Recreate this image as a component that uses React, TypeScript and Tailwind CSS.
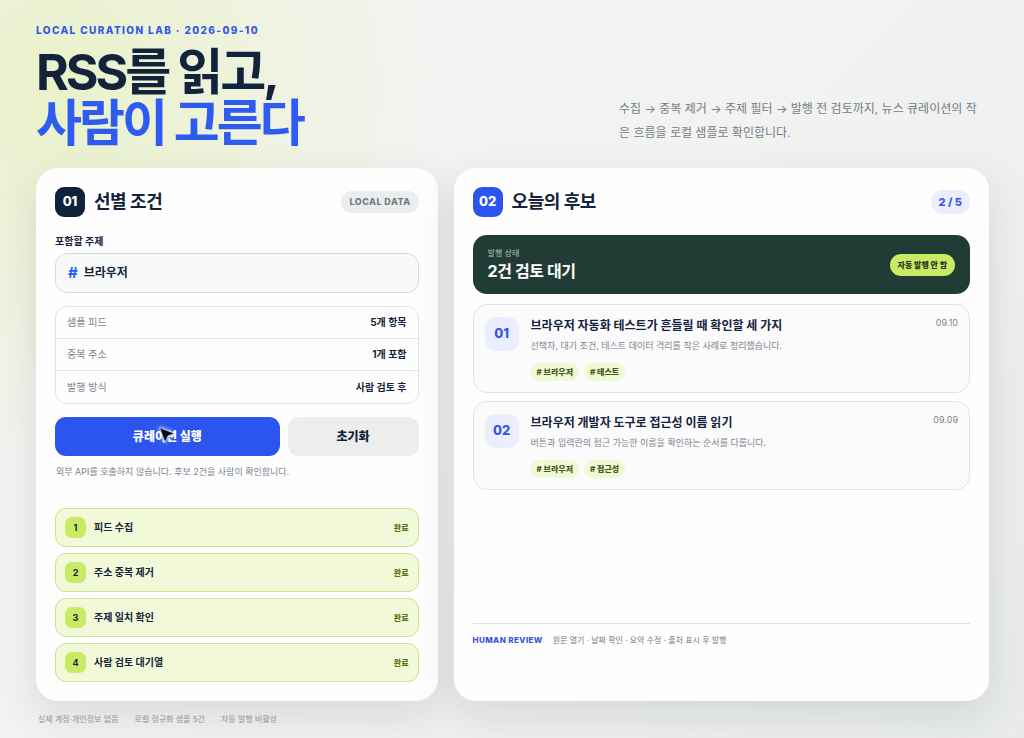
import { useState } from "react";
import clsx from "clsx";

type Article = {
	id: string;
	title: string;
	summary: string;
	date: string;
	tags: string[];
}

const facts = [
	{ label: "샘플 피드", value: "5개 항목" },
	{ label: "중복 주소", value: "1개 포함" },
	{ label: "발행 방식", value: "사람 검토 후" },
];

const steps = ["피드 수집", "주소 중복 제거", "주제 일치 확인", "사람 검토 대기열"];

const articles: Article[] = [
	{
		id: "01",
		title: "브라우저 자동화 테스트가 흔들릴 때 확인할 세 가지",
		summary: "선택자, 대기 조건, 테스트 데이터 격리를 작은 사례로 정리했습니다.",
		date: "09.10",
		tags: ["브라우저", "테스트"],
	},
	{
		id: "02",
		title: "브라우저 개발자 도구로 접근성 이름 읽기",
		summary: "버튼과 입력란의 접근 가능한 이름을 확인하는 순서를 다룹니다.",
		date: "09.09",
		tags: ["브라우저", "접근성"],
	},
];

const notes = ["실제 계정·개인정보 없음", "로컬 정규화 샘플 5건", "자동 발행 비활성"];

const PanelTitle: React.FC<{ no: string; title: string; accent?: boolean }> = ({ no, title, accent }) => (
	<div className="flex items-center gap-[9px]">
		<span
			className={clsx(
				"flex size-[30px] items-center justify-center rounded-[9px] text-[13px] font-extrabold text-white",
				accent ? "bg-[#2b55ec]" : "bg-[#10213b]"
			)}
		>
			{no}
		</span>
		<h2 className="text-[18px] leading-[26px] font-bold tracking-tight">{title}</h2>
	</div>
)

const Pointer = () => (
	<svg className="pointer-events-none absolute top-2 left-[102px] size-5 drop-shadow-[0_0_2px_#ffffff]" viewBox="0 0 20 20" aria-hidden="true">
		<path d="M2.5 2.5 17.5 8.5 11 11 8 17.5Z" fill="#080b14" stroke="#c4cffb" strokeWidth="0.8" strokeLinejoin="round" />
	</svg>
)

const ArticleCard: React.FC<{ article: Article }> = ({ article }) => (
	<li className="flex gap-3 rounded-[14px] border border-[#e1e4e6] bg-[#fbfbfc] px-[11px] pt-3 pb-[11px]">
		<span className="flex size-[34px] shrink-0 items-center justify-center rounded-[10px] bg-[#ebeeff] text-[13px] font-extrabold text-[#3557e0]">
			{article.id}
		</span>
		<div className="min-w-0 flex-1">
			<h3 className="text-[12px] leading-[18px] font-bold">{article.title}</h3>
			<p className="mt-[3px] text-[9px] leading-4 text-[#7c8591]">{article.summary}</p>
			<div className="mt-[9px] flex gap-[5px]">
				{article.tags.map(tag => (
					<span key={tag} className="rounded-full bg-[#f0f9d4] px-[6px] text-[8px] leading-[18px] font-extrabold text-[#44581c]">
						# {tag}
					</span>
				))}
			</div>
		</div>
		<time className="text-[9px] leading-3 text-[#7c8591]">{article.date}</time>
	</li>
)

export default function App() {
	const [topic, setTopic] = useState("브라우저");

	return (
		<div className="min-h-screen bg-[radial-gradient(circle_at_6%_12%,#e9f2c9_0%,#edf2d9_12%,transparent_32%),linear-gradient(135deg,#f3f4f1_0%,#f2f2f1_50%,#e8ebe9_100%)] pt-[22px] pr-[35px] pl-9 font-[Inter,'Noto_Sans_CJK_KR',sans-serif] text-[#14233c]">
			<header className="flex items-end justify-between">
				<div>
					<p className="text-[10px] leading-4 font-extrabold tracking-[0.14em] text-[#3159e8]">LOCAL CURATION LAB · 2026-09-10</p>
					<h1 className="mt-[9px] text-[50px] leading-[51px] font-bold tracking-[-0.06em]">
						RSS를 읽고,
						<span className="block text-[#2f5cf0]">사람이 고른다</span>
					</h1>
				</div>
				<p className="mb-1 w-[370px] pr-1 text-[12px] leading-6 text-[#727d89]">
					수집 → 중복 제거 → 주제 필터 → 발행 전 검토까지, 뉴스 큐레이션의 작은 흐름을 로컬 샘플로 확인합니다.
				</p>
			</header>

			<main className="mt-[19px] grid grid-cols-[3fr_4fr] gap-4">
				<section className="flex flex-col rounded-[22px] bg-[#fefefe] p-[19px] shadow-[0_14px_40px_rgba(30,60,50,0.12)]">
					<div className="flex items-center justify-between">
						<PanelTitle no="01" title="선별 조건" />
						<span className="rounded-full bg-[#ebeeee] px-2 text-[9px] leading-[22px] font-extrabold tracking-wider text-[#727d86]">LOCAL DATA</span>
					</div>

					<label htmlFor="topic" className="mt-4 text-[10px] leading-4 font-bold">포함할 주제</label>
					<div className="mt-1 flex h-10 items-center gap-[6px] rounded-xl border border-[#d8dbdd] bg-[#f8f9f9] px-3">
						<span className="text-[15px] font-bold text-[#2f5cf0]">#</span>
						<input
							id="topic"
							value={topic}
							onChange={e => setTopic(e.target.value)}
							className="min-w-0 flex-1 bg-transparent text-[12px] font-bold outline-none"
						/>
					</div>

					<dl className="mt-[13px] divide-y divide-[#e1e4e6] rounded-xl border border-[#e1e4e6]">
						{facts.map(fact => (
							<div key={fact.label} className="flex h-8 items-center justify-between px-[11px] text-[10px]">
								<dt className="text-[#7c8591]">{fact.label}</dt>
								<dd className="font-bold">{fact.value}</dd>
							</div>
						))}
					</dl>

					<div className="mt-[13px] grid grid-cols-[12fr_7fr] gap-2">
						<button type="button" className="relative h-[39px] rounded-[11px] bg-[#2b55ec] text-[12px] font-extrabold text-white">
							큐레이션 실행
							<Pointer />
						</button>
						<button type="button" className="h-[39px] rounded-[11px] bg-[#ebeeed] text-[12px] font-extrabold">초기화</button>
					</div>
					<p className="mt-2 px-px text-[9px] leading-4 text-[#7c8591]">외부 API를 호출하지 않습니다. 후보 2건을 사람이 확인합니다.</p>

					<ol className="mt-7 space-y-[6px]">
						{steps.map((step, i) => (
							<li key={step} className="flex h-[39px] items-center gap-2 rounded-[11px] border border-[#cfe08f] bg-[#f1f9d8] px-[9px]">
								<span className="flex size-[21px] items-center justify-center rounded-[7px] bg-[#cae965] text-[9px] font-bold">{i + 1}</span>
								<span className="flex-1 text-[10px] font-bold">{step}</span>
								<span className="text-[8px] font-extrabold text-[#5d7415]">완료</span>
							</li>
						))}
					</ol>
				</section>

				<section className="rounded-[22px] bg-[#fefefe] p-[19px] shadow-[0_14px_40px_rgba(30,60,50,0.12)]">
					<div className="flex items-center justify-between">
						<PanelTitle no="02" title="오늘의 후보" accent />
						<span className="rounded-full bg-[#ebeeff] px-2 text-[11px] leading-6 font-extrabold text-[#3557e0]">2 / 5</span>
					</div>

					<div className="mt-[18px] flex h-[59px] items-center justify-between rounded-[14px] bg-[#213c34] px-[15px] text-white">
						<div>
							<p className="text-[8px] leading-3 text-[#b4c2bd]">발행 상태</p>
							<p className="text-[16px] leading-6 font-bold tracking-tight">2건 검토 대기</p>
						</div>
						<span className="rounded-full bg-[#cae965] px-2 text-[8px] leading-[22px] font-extrabold text-[#243c20]">자동 발행 안 함</span>
					</div>

					<ul className="mt-[10px] min-h-[319px] space-y-2">
						{articles.map(article => <ArticleCard key={article.id} article={article} />)}
					</ul>

					<div className="flex gap-[10px] border-t border-[#dde1e3] pt-2 text-[8px] leading-4">
						<strong className="font-extrabold tracking-wider text-[#3557e0]">HUMAN REVIEW</strong>
						<span className="text-[#727d89]">원문 열기 · 날짜 확인 · 요약 수정 · 출처 표시 후 발행</span>
					</div>
				</section>
			</main>

			<footer className="flex gap-4 px-[2px] py-[10px] text-[8px] leading-4 text-[#8f969b]">
				{notes.map(note => <span key={note}>{note}</span>)}
			</footer>
		</div>
	)
}
